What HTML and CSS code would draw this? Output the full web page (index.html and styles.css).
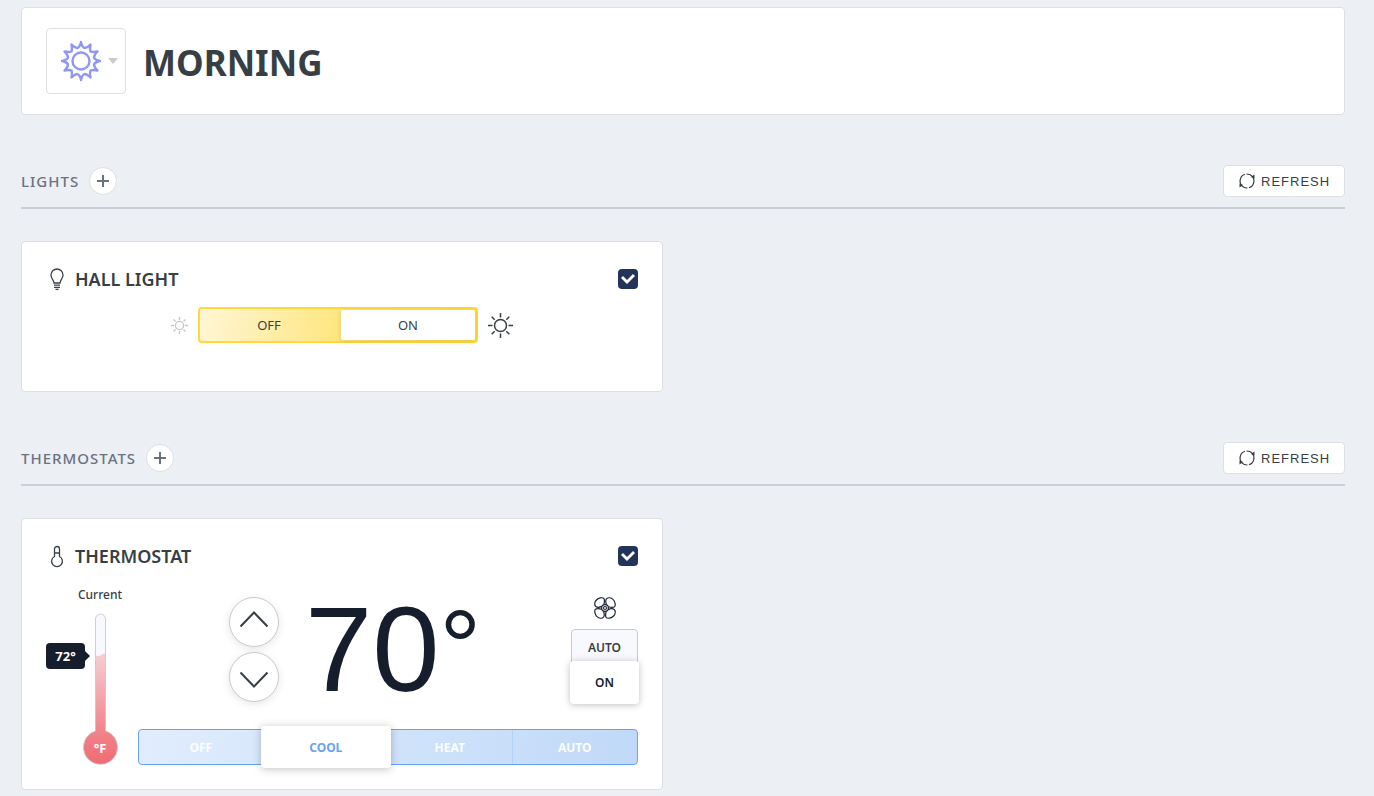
FILE: index.html
```html
<!DOCTYPE html>
<html lang="en">
<head>
    <meta charset="utf-8">
    <title>Morning</title>
    <link rel="stylesheet" href="styles.css">
</head>
<body>
    <svg class="sprite" aria-hidden="true">
        <symbol id="refresh" viewBox="0 0 16 16">
            <path d="M4.500 14A7 7 0 0 1 6 1.300M7.500 1A7 7 0 0 1 13 3.200M11.500 2A7 7 0 0 1 10 14.700M8.500 15A7 7 0 0 1 3 12.800" fill="none" stroke="currentColor" stroke-width="1.200"/>
            <path d="M15.500 1.500v4l-3.700-1.500zM.500 14.500v-4l3.700 1.500z" fill="currentColor"/>
        </symbol>
        <symbol id="sun" viewBox="0 0 25 25">
            <circle cx="12.5" cy="12.5" r="6" fill="none" stroke="currentColor"/>
            <path d="M12.5 0v4.5M12.5 20.500v4.500M0 12.500h4.500M20.500 12.500h4.500M3.700 3.700l3 3M18.300 18.300l3 3M3.700 21.300l3-3M18.300 6.700l3-3" fill="none" stroke="currentColor"/>
        </symbol>
    </svg>
    <main class="page">
        <header class="scene">
            <button class="scene__icon" type="button" aria-label="Scene icon">
                <svg width="42" height="42" viewBox="-21 -21 42 42" fill="none" stroke="#8f96f3" stroke-width="2.4" stroke-linejoin="round">
                    <circle r="8.500"/>
                    <path d="M0-19Q1-14 3.500-13Q6-13 9.500-16.500Q8.500-12 9.500-9.500Q12-8.500 16.500-9.500Q13-6 13-3.500Q14-1 19 0Q14 1 13 3.500Q13 6 16.500 9.500Q12 8.500 9.500 9.500Q8.500 12 9.500 16.500Q6 13 3.500 13Q1 14 0 19Q-1 14-3.500 13Q-6 13-9.500 16.500Q-8.500 12-9.500 9.500Q-12 8.500-16.500 9.500Q-13 6-13 3.500Q-14 1-19 0Q-14-1-13-3.500Q-13-6-16.500-9.500Q-12-8.500-9.500-9.500Q-8.500-12-9.500-16.500Q-6-13-3.500-13Q-1-14 0-19Z"/>
                </svg>
                <span class="scene__caret"></span>
            </button>
            <h1 class="scene__title">MORNING</h1>
        </header>

        <section class="group">
            <div class="group__head">
                <h2 class="group__title">LIGHTS</h2>
                <button class="group__add" type="button" aria-label="Add light"></button>
                <button class="group__refresh" type="button"><svg width="16" height="16"><use href="#refresh"/></svg>REFRESH</button>
            </div>
            <div class="group__cards">
                <article class="card">
                    <div class="card__head">
                        <svg class="card__icon" width="22" height="24" viewBox="0 -1 22 24" fill="none" stroke="#3a4149" stroke-width="1.3">
                            <path d="M8 15C8 12 5 11 5 7a6 6 0 0 1 12 0C17 11 14 12 14 15ZM8 17.200h6M8 19.300h6M9.500 21.400h3"/>
                        </svg>
                        <h3 class="card__title">HALL LIGHT</h3>
                        <input class="card__check" type="checkbox" aria-label="Hall light" checked>
                    </div>
                    <div class="light">
                        <svg class="light__dim" width="17" height="17"><use href="#sun"/></svg>
                        <div class="switch">
                            <button class="switch__item" type="button">OFF</button>
                            <button class="switch__item switch__item--active" type="button">ON</button>
                        </div>
                        <svg class="light__bright" width="25" height="25"><use href="#sun"/></svg>
                    </div>
                </article>
            </div>
        </section>

        <section class="group">
            <div class="group__head">
                <h2 class="group__title">THERMOSTATS</h2>
                <button class="group__add" type="button" aria-label="Add thermostat"></button>
                <button class="group__refresh" type="button"><svg width="16" height="16"><use href="#refresh"/></svg>REFRESH</button>
            </div>
            <div class="group__cards">
                <article class="card">
                    <div class="card__head">
                        <svg class="card__icon" width="22" height="24" viewBox="0 -1 22 24" fill="none" stroke="#3a4149" stroke-width="1.3">
                            <path d="M8.500 11.500V4a2.500 2.500 0 0 1 5 0v7.500a5.400 5.400 0 1 1-5 0ZM8.500 8h5"/>
                        </svg>
                        <h3 class="card__title">THERMOSTAT</h3>
                        <input class="card__check" type="checkbox" aria-label="Thermostat" checked>
                    </div>
                    <div class="thermo">
                        <div class="gauge">
                            <span class="gauge__label">Current</span>
                            <div class="gauge__body">
                                <svg width="36" height="152" viewBox="0 0 36 152">
                                    <defs>
                                        <linearGradient id="heat" gradientUnits="userSpaceOnUse" x1="0" y1="42" x2="0" y2="152">
                                            <stop offset="0" stop-color="#f6cdd3"/>
                                            <stop offset=".65" stop-color="#f38790"/>
                                            <stop offset="1" stop-color="#f06a70"/>
                                        </linearGradient>
                                        <clipPath id="tube"><path id="outline" d="M13.500 118V6a5 5 0 0 1 10 0V118a17 17 0 1 1-10 0Z"/></clipPath>
                                    </defs>
                                    <use href="#outline" fill="#f8f9fe"/>
                                    <path d="M0 42h13q3 2 6 0t5-1h12v111H0Z" fill="url(#heat)" clip-path="url(#tube)"/>
                                    <use href="#outline" fill="none" stroke="#c4c7ca" stroke-opacity=".85"/>
                                </svg>
                                <span class="gauge__value">72°</span>
                                <span class="gauge__unit">°F</span>
                            </div>
                        </div>
                        <div class="thermo__main">
                            <div class="thermo__top">
                                <div class="stepper">
                                    <button class="stepper__btn" type="button" aria-label="Warmer">
                                        <svg width="30" height="30" viewBox="0 0 30 30"><path d="M1.500 19.500 15 5.500l13.500 14"/></svg>
                                    </button>
                                    <button class="stepper__btn" type="button" aria-label="Cooler">
                                        <svg width="30" height="30" viewBox="0 0 30 30"><path d="M1.500 10.500 15 24.500l13.500-14"/></svg>
                                    </button>
                                </div>
                                <div class="thermo__temp">70<span class="thermo__degree">°</span></div>
                                <div class="fan">
                                    <svg width="22" height="22" viewBox="-11 -11 22 22" fill="none" stroke="#1c2536" stroke-width="1.200">
                                        <circle r="3.400"/>
                                        <circle r="1.500"/>
                                        <path id="blade" d="M-1.300-3.200C-.5-5.500-.5-8.500-1.200-9.600C-2.500-10.800-6.500-10.200-8.600-8C-10.600-6-10.800-3-9.200-1.500C-7.500-.2-5-.8-3.200-1.600"/>
                                        <use href="#blade" transform="rotate(90)"/>
                                        <use href="#blade" transform="rotate(180)"/>
                                        <use href="#blade" transform="rotate(270)"/>
                                    </svg>
                                    <button class="fan__item" type="button">AUTO</button>
                                    <button class="fan__item fan__item--active" type="button">ON</button>
                                </div>
                            </div>
                            <div class="modes">
                                <button class="modes__item" type="button">OFF</button>
                                <button class="modes__item modes__item--active" type="button">COOL</button>
                                <button class="modes__item" type="button">HEAT</button>
                                <button class="modes__item" type="button">AUTO</button>
                            </div>
                        </div>
                    </div>
                </article>
            </div>
        </section>
    </main>
</body>
</html>
```
FILE: styles.css
```css
* {
    margin: 0;
    padding: 0;
    box-sizing: border-box;
}
body {
    background: #eceff4;
    color: #373f45;
    font-family: "Noto Sans", "Open Sans", sans-serif;
    font-size: 12px;
}
button {
    font: inherit;
    color: inherit;
    border: 0;
    background: none;
    cursor: pointer;
}
svg {
    display: block;
    flex: none;
}
.sprite {
    position: absolute;
    width: 0;
    height: 0;
}
.page {
    padding: 7px 29px 6px 21px;
}

/* scene header */
.scene {
    display: flex;
    align-items: center;
    gap: 17px;
    padding: 20px 24px;
    background: #fff;
    border: 1px solid #dddfe2;
    border-radius: 4px;
}
.scene__icon {
    display: flex;
    align-items: center;
    gap: 6px;
    width: 80px;
    height: 66px;
    padding-left: 13px;
    border: 1px solid #dddfe2;
    border-radius: 4px;
}
.scene__caret {
    border: 5px solid transparent;
    border-top: 6px solid #c8cacc;
    border-bottom: 0;
}
.scene__title {
    padding-top: 4px;
    font-size: 35px;
    line-height: 50px;
    font-weight: 700;
}

/* device groups */
.group {
    margin-top: 50px;
}
.group__head {
    display: flex;
    align-items: center;
    padding-bottom: 10px;
    border-bottom: 2px solid #cbd0d6;
}
.group__title {
    color: #6b7280;
    font-size: 15px;
    line-height: 20px;
    font-weight: 500;
    letter-spacing: 1px;
}
.group__add {
    width: 28px;
    height: 28px;
    margin-left: 10px;
    border: 1px solid #dddfe2;
    border-radius: 50%;
    background:
        linear-gradient(#697080, #697080) center / 12px 2px no-repeat,
        linear-gradient(#697080, #697080) center / 2px 12px no-repeat,
        #fff;
}
.group__refresh {
    display: flex;
    align-items: center;
    gap: 6px;
    width: 122px;
    height: 32px;
    margin-left: auto;
    padding-left: 15px;
    border: 1px solid #dddfe2;
    border-radius: 4px;
    background: #fff;
    font-family: "Liberation Sans", Arial, sans-serif;
    font-size: 13px;
    letter-spacing: 1px;
}
.group__cards {
    display: grid;
    grid-template-columns: 1fr 1fr;
    gap: 40px;
    margin-top: 32px;
}

/* card */
.card {
    padding: 25px 24px 24px;
    background: #fff;
    border: 1px solid #dddfe2;
    border-radius: 4px;
}
.card__head {
    display: flex;
    align-items: center;
    gap: 7px;
    height: 24px;
}
.card__title {
    font-size: 18px;
    line-height: 24px;
    font-weight: 600;
}
.card__check {
    appearance: none;
    width: 20px;
    height: 20px;
    margin-left: auto;
    border-radius: 4px;
    background: #22345a;
}
.card__check:checked::before {
    content: "";
    display: block;
    width: 20px;
    height: 20px;
    background: #fff;
    clip-path: polygon(3px 9px, 5px 7px, 9px 11px, 15px 5px, 17px 7px, 9px 15px);
}

/* light */
.light {
    display: flex;
    align-items: center;
    justify-content: center;
    gap: 10px;
    padding: 16px 0 24px;
}
.light__dim {
    color: #c4c6c8;
    stroke-width: 2;
}
.light__bright {
    stroke-width: 1.5;
}
.switch {
    display: grid;
    grid-template-columns: 1fr 1fr;
    width: 280px;
    height: 36px;
    border: 2px solid #ffd83b;
    border-radius: 4px;
    background: linear-gradient(100deg, #fff6d6, #fee680 50%, #fddc55);
    font-size: 13px;
}
.switch__item--active {
    margin: 1px 1px 1px 3px;
    border-radius: 2px;
    background: #fff;
    box-shadow: 0 1px 5px rgba(120, 90, 0, .2);
}

/* thermostat */
.thermo {
    display: flex;
    padding-top: 17px;
}
.gauge {
    display: flex;
    flex-direction: column;
    align-items: center;
    width: 44px;
    margin: 0 16px 0 32px;
}
.gauge__label {
    font-weight: 500;
    line-height: 20px;
    margin-bottom: 8px;
}
.gauge__body {
    position: relative;
}
.gauge__value {
    position: absolute;
    top: 30px;
    right: 33px;
    width: 39px;
    border-radius: 4px;
    background: #161d2c;
    color: #fff;
    font-size: 13px;
    font-weight: 700;
    line-height: 26px;
    text-align: center;
}
.gauge__value::after {
    content: "";
    position: absolute;
    left: 100%;
    top: 8px;
    border: 5px solid transparent;
    border-left-color: #161d2c;
    border-right: 0;
}
.gauge__unit {
    position: absolute;
    left: 0;
    bottom: 5px;
    width: 100%;
    color: #fff;
    font-size: 13px;
    font-weight: 700;
    line-height: 24px;
    text-align: center;
}
.thermo__main {
    display: flex;
    flex: 1;
    flex-direction: column;
    justify-content: space-between;
}
.thermo__top {
    display: flex;
    align-items: flex-start;
    padding: 12px 0 0 91px;
}
.stepper {
    display: grid;
    gap: 5px;
}
.stepper__btn {
    display: grid;
    place-items: center;
    width: 50px;
    height: 50px;
    border: 1px solid #c8cacc;
    border-radius: 50%;
    background: #fff;
    box-shadow: 0 2px 8px rgba(0, 0, 0, .1);
}
.stepper__btn path {
    fill: none;
    stroke: #373f45;
    stroke-width: 2;
}
.thermo__temp {
    display: flex;
    margin-left: 26px;
    color: #161d2c;
    font-family: "Liberation Sans", Arial, sans-serif;
    font-size: 121px;
    line-height: 104px;
}
.thermo__degree {
    font-size: 104px;
    line-height: 100px;
}
.fan {
    display: flex;
    flex-direction: column;
    align-items: center;
    width: 67px;
    margin-left: auto;
}
.fan__item {
    width: 67px;
    height: 36px;
    margin-top: 10px;
    border: 1px solid #c8cacc;
    border-radius: 4px 4px 0 0;
    background: #f8f9fe;
    font-weight: 600;
}
.fan__item--active {
    width: 69px;
    height: 43px;
    margin: -4px -1px 0;
    border: 0;
    border-radius: 4px;
    background: #fff;
    color: #161d2c;
    box-shadow: 0 1px 7px rgba(0, 0, 0, .25);
}
.modes {
    display: grid;
    grid-template-columns: repeat(4, 1fr);
    height: 36px;
    border: 1px solid #66a4ee;
    border-radius: 4px;
    background: linear-gradient(100deg, #e1edfd, #c0d9f8);
    color: #fbfdff;
}
.modes__item {
    border-right: 1px solid #b4d1f8;
    font-weight: 700;
}
.modes__item:last-child {
    border-right: 0;
}
.modes .modes__item--active {
    margin: -4px -3px;
    border: 0;
    border-radius: 4px;
    background: #fff;
    color: #6aa3ec;
    box-shadow: 0 1px 8px rgba(0, 0, 0, .25);
    z-index: 1;
}
```
